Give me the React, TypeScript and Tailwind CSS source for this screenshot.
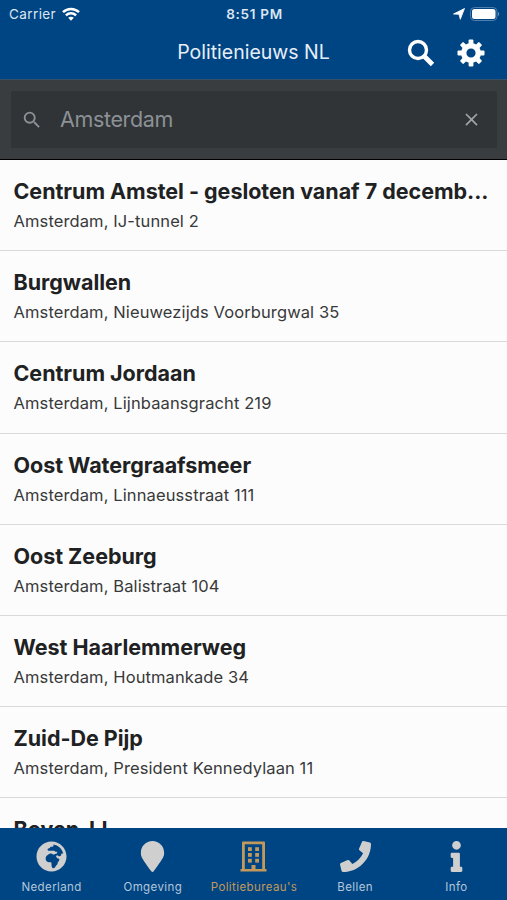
import React from 'react';
import { FaGlobeAfrica, FaInfo, FaMapMarker, FaPhone } from 'react-icons/fa';
import { MdClose, MdSearch } from 'react-icons/md';

const stations = [
  { name: 'Centrum Amstel - gesloten vanaf 7 decemb...', address: 'Amsterdam, IJ-tunnel 2' },
  { name: 'Burgwallen', address: 'Amsterdam, Nieuwezijds Voorburgwal 35' },
  { name: 'Centrum Jordaan', address: 'Amsterdam, Lijnbaansgracht 219' },
  { name: 'Oost Watergraafsmeer', address: 'Amsterdam, Linnaeusstraat 111' },
  { name: 'Oost Zeeburg', address: 'Amsterdam, Balistraat 104' },
  { name: 'West Haarlemmerweg', address: 'Amsterdam, Houtmankade 34' },
  { name: 'Zuid-De Pijp', address: 'Amsterdam, President Kennedylaan 11' },
  { name: 'Boven-IJ', address: '' },
];

const tabs = [
  { label: 'Nederland', icon: FaGlobeAfrica, active: false },
  { label: 'Omgeving', icon: FaMapMarker, active: false },
  { label: "Politiebureau's", icon: BuildingIcon, active: true },
  { label: 'Bellen', icon: FaPhone, active: false },
  { label: 'Info', icon: FaInfo, active: false },
];

function BuildingIcon({ className }: { className?: string }) {
  return (
    <svg className={className} viewBox="0 0 31 31" fill="currentColor">
      <path fillRule="evenodd" d="M4 1.500q0-1 1-1h21q1 0 1 1V28h1.500v2.500h-26V28H4zM6.800 3.300V28h6.700v-4h4v4h6.700V3.300z" />
      {[6.2, 12, 17.800].map((y) => (
        <g key={y}>
          <rect x="10" y={y} width="3.800" height="3.800" />
          <rect x="17.200" y={y} width="3.800" height="3.800" />
        </g>
      ))}
    </svg>
  );
}

function GearIcon({ className }: { className?: string }) {
  return (
    <svg className={className} viewBox="-14 -14 28 28" fill="currentColor">
      <circle r="7.300" fill="none" stroke="currentColor" strokeWidth="5.400" />
      {[0, 45, 90, 135].map((angle) => (
        <g key={angle} transform={`rotate(${angle})`}>
          <rect x="-2.400" y="-13.500" width="4.800" height="6" rx="1" />
          <rect x="-2.400" y="7.500" width="4.800" height="6" rx="1" />
        </g>
      ))}
    </svg>
  );
}

function StatusBar() {
  return (
    <div className="grid h-[27px] grid-cols-3 items-center pr-[7px] pl-[9px] text-[13.5px] text-[#dbe6f3]">
      <div className="flex items-center gap-[6px]">
        <span className="pt-px tracking-[0.4px]">Carrier</span>
        <svg className="h-[14px] w-[18px]" viewBox="0 0 18 14" fill="none" stroke="white" strokeWidth="2.5">
          <path d="M1 5.2C5.4.9 12.6.9 17 5.2" />
          <path d="M3.9 8.3c2.9-2.7 7.3-2.7 10.2 0" />
          <path d="M6.2 10.8 9 13.8l2.8-3c-1.6-1.4-4-1.4-5.600 0z" fill="white" stroke="none" />
        </svg>
      </div>
      <span className="pt-px text-center text-[13.5px] font-semibold tracking-[0.7px] whitespace-nowrap">8:51 PM</span>
      <div className="flex items-center justify-end gap-[5px]">
        <svg className="size-[12px]" viewBox="0 0 12 12" fill="white">
          <path d="M11.500.5 7.300 11.300 6 6.300.5 6z" stroke="white" strokeWidth=".8" strokeLinejoin="round" />
        </svg>
        <svg className="h-[14px] w-[30px]" viewBox="0 0 30 14">
          <rect x="0.5" y="0.5" width="26.5" height="13" rx="4" fill="none" stroke="#4f7eac" />
          <rect x="2" y="2" width="23.5" height="10" rx="2.5" fill="white" />
          <path d="M28 5v4c1.6-.5 1.6-3.500 0-4z" fill="#6f95bd" />
        </svg>
      </div>
    </div>
  );
}

export default function App() {
  return (
    <div className="flex h-[900px] w-[507px] flex-col overflow-hidden bg-[#fcfcfc] font-['Inter',sans-serif]">
      <header className="h-[80px] shrink-0 border-b border-[#36516c] bg-[#004583]">
        <StatusBar />
        <div className="grid h-[51px] grid-cols-[1fr_auto_1fr] items-center">
          <span />
          <h1 className="text-[19.5px] text-[#e6eef7]">Politienieuws NL</h1>
          <div className="flex items-center justify-end gap-[22px] pr-[22px] text-white">
            <svg className="size-[28px]" viewBox="0 0 28 28" fill="none" stroke="currentColor">
              <circle cx="11" cy="11" r="8.500" strokeWidth="3.400" />
              <path d="m17 17 8.500 8.500" strokeWidth="4.800" />
            </svg>
            <GearIcon className="size-[28px]" />
          </div>
        </div>
      </header>

      <div className="h-[80px] shrink-0 border-b border-black bg-[#393d40] pt-[11px] pr-[10px] pl-[11px]">
        <div className="flex h-[57px] items-center rounded-[2px] bg-[#303437] pr-[15px] pl-[10px] text-[#8c9196]">
          <MdSearch className="size-[22px]" />
          <span className="ml-[17px] flex-1 text-[21.5px] tracking-[-0.35px]">Amsterdam</span>
          <MdClose className="size-[21px] text-[#a0a3a5]" />
        </div>
      </div>

      <main className="min-h-0 flex-1 overflow-hidden">
        {stations.map((station) => (
          <div key={station.name} className="h-[91.2px] border-b border-[#d9dbda] px-[13.5px] pt-[16px]">
            <h2 className="text-[21.5px] leading-[30px] font-bold tracking-[-0.03px] whitespace-nowrap text-[#202122]">
              {station.name}
            </h2>
            <p className="mt-[3px] text-[16.5px] leading-[24px] tracking-[0.11px] text-[#38393a]">
              {station.address}
            </p>
          </div>
        ))}
      </main>

      <nav className="grid h-[72px] shrink-0 grid-cols-5 bg-[#004583] pt-[13px] pl-[1px]">
        {tabs.map(({ label, icon: Icon, active }) => (
          <div key={label} className={`flex flex-col items-center ${active ? 'text-[#c2995b]' : 'text-[#cfcfcf]'}`}>
            <Icon className="size-[31px]" />
            <span
              className={`mt-[7px] text-[11.5px] leading-[16px] tracking-[0.4px] whitespace-nowrap ${
                active ? '' : 'text-[#b3c6da]'
              }`}
            >
              {label}
            </span>
          </div>
        ))}
      </nav>
    </div>
  );
}
